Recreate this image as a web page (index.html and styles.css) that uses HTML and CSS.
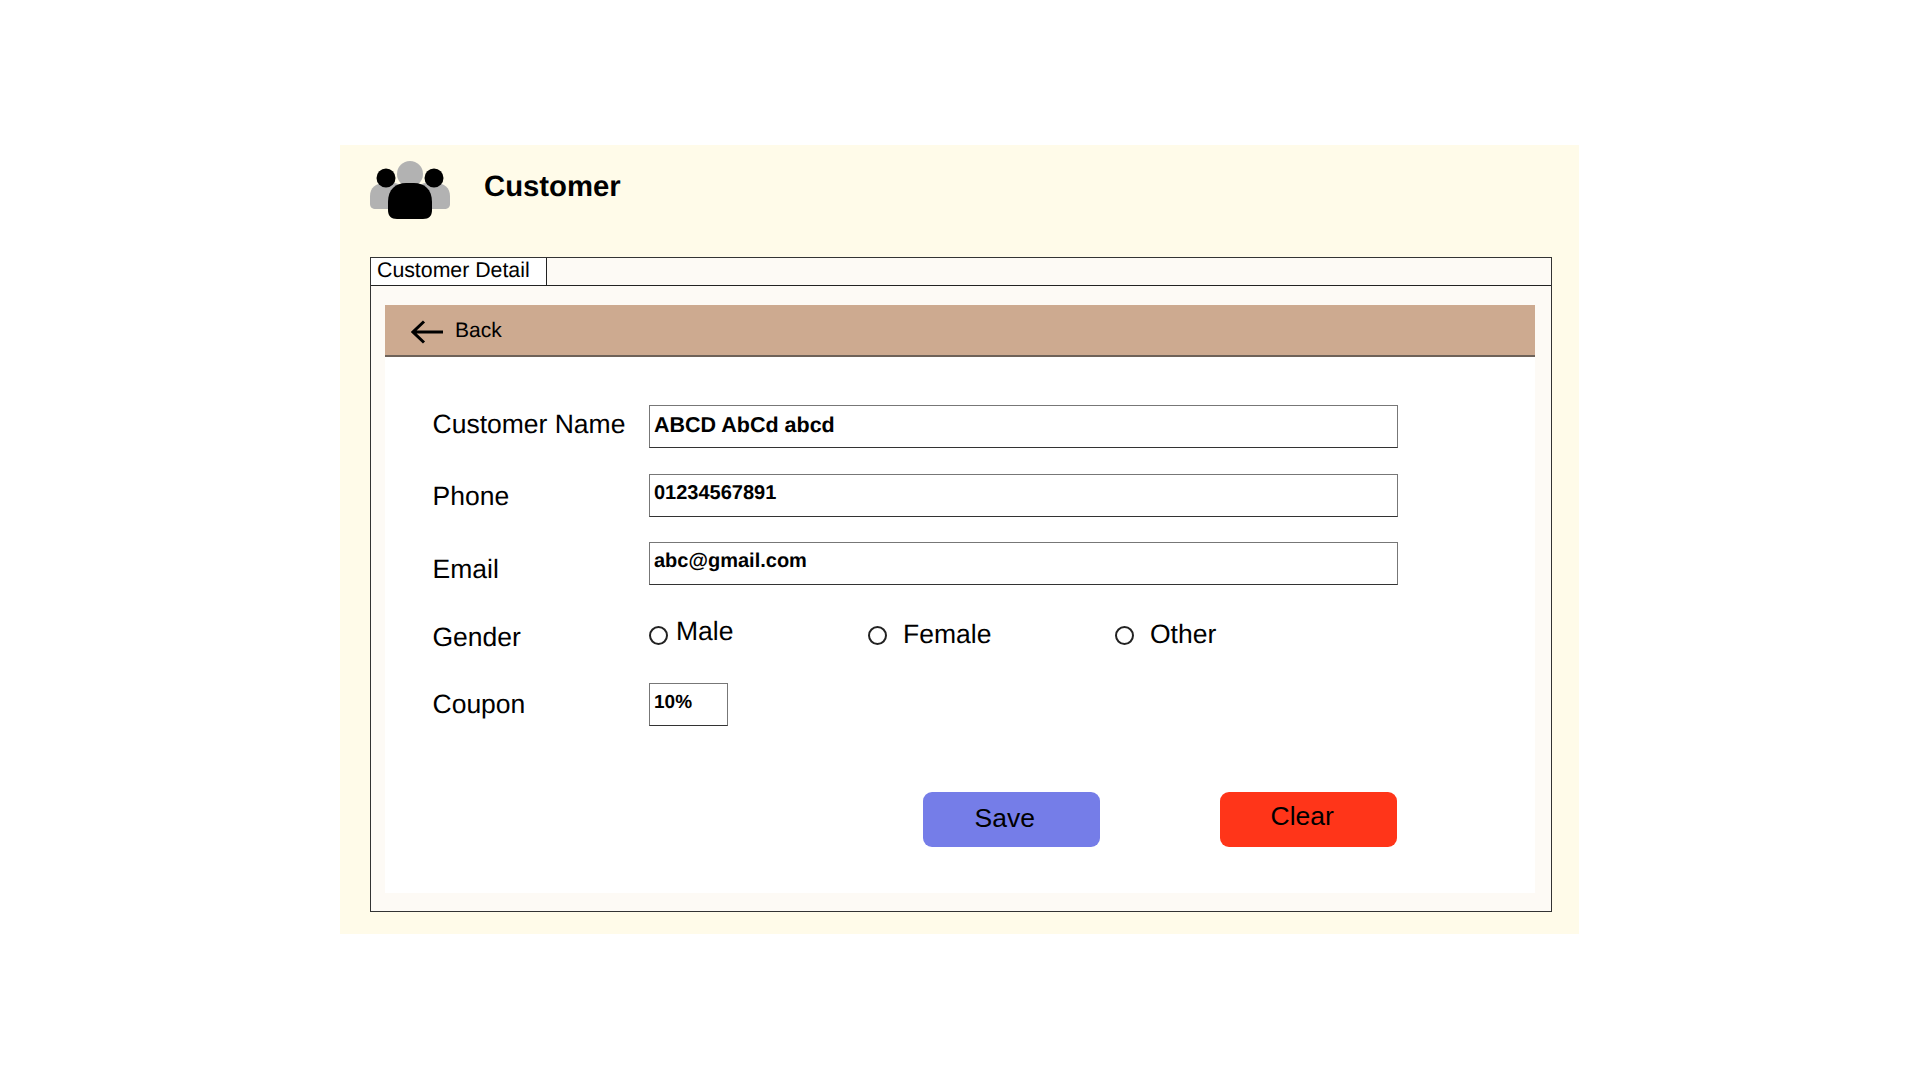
FILE: index.html
```html
<!DOCTYPE html>
<html lang="en">
<head>
<meta charset="utf-8">
<title>Customer</title>
<link rel="stylesheet" href="styles.css">
</head>
<body>
<main class="panel">
  <header class="head">
    <svg class="logo" width="82" height="60" viewBox="0 0 82 60" aria-hidden="true">
      <path class="grey" d="M0 36C0 28 6 23 14 23h10c6 0 10 6 10 13v8c0 3-2 5-5 5H6c-4 0-6-2-6-5z"/>
      <path class="grey" d="M80 36c0-8-6-13-14-13H56c-6 0-10 6-10 13v8c0 3 2 5 5 5h23c4 0 6-2 6-5z"/>
      <circle class="black" cx="16" cy="18" r="9.500"/>
      <circle class="black" cx="64" cy="18" r="9.500"/>
      <circle class="grey" cx="40" cy="14" r="13"/>
      <path class="black" d="M18 42C18 29 26 23 36 23H44C54 23 62 29 62 42v8c0 6-3 9-9 9H27c-6 0-9-3-9-9z"/>
    </svg>
    <h1 class="title">Customer</h1>
  </header>
  <section class="frame">
    <div class="tabs"><div class="tab">Customer Detail</div></div>
    <div class="body">
      <div class="bar">
        <svg class="arrow" width="34" height="24" viewBox="0 0 34 24" aria-hidden="true">
          <path d="M32 12H2M13 1.500 2 12l11 10.500"/>
        </svg>
        <span class="back">Back</span>
      </div>
      <form class="form">
        <div class="row">
          <label class="label up">Customer Name</label>
          <div class="input wide big">ABCD AbCd abcd</div>
        </div>
        <div class="row">
          <label class="label mid">Phone</label>
          <div class="input wide">01234567891</div>
        </div>
        <div class="row">
          <label class="label down">Email</label>
          <div class="input wide">abc@gmail.com</div>
        </div>
        <div class="row gender">
          <label class="label">Gender</label>
          <div class="radios">
            <span class="opt male"><i class="radio"></i><span class="optlabel tight">Male</span></span>
            <span class="opt female"><i class="radio"></i><span class="optlabel">Female</span></span>
            <span class="opt"><i class="radio"></i><span class="optlabel">Other</span></span>
          </div>
        </div>
        <div class="row">
          <label class="label coupon">Coupon</label>
          <div class="input small">10%</div>
        </div>
        <div class="actions">
          <button type="button" class="btn save"><span>Save</span></button>
          <button type="button" class="btn clear"><span>Clear</span></button>
        </div>
      </form>
    </div>
  </section>
</main>
</body>
</html>
```

FILE: styles.css
```css
* { box-sizing: border-box; }
html, body { margin: 0; padding: 0; }
body {
  background: #fff;
  font-family: "Liberation Sans", Arial, sans-serif;
  color: #000;
  min-height: 1080px;
  padding: 145px 341px 0 340px;
  text-rendering: geometricPrecision;
}
.panel {
  background: #fffbe9;
  height: 789px;
  padding: 15px 27px 22px 30px;
}
.head {
  display: flex;
  align-items: flex-start;
  height: 97px;
}
.logo { display: block; flex: none; }
.grey { fill: #b2b2b2; }
.black { fill: #000; }
.title {
  margin: 10px 0 0 32px;
  font-size: 29.300px;
  line-height: 34px;
  font-weight: 700;
}
.frame {
  height: 655px;
  border: 1px solid #333;
  background: #fdfaf5;
  display: flex;
  flex-direction: column;
}
.tabs {
  height: 28px;
  border-bottom: 1px solid #222;
  display: flex;
  flex: none;
}
.tab {
  width: 176px;
  height: 27px;
  background: #fff;
  border-right: 1px solid #222;
  font-size: 21.300px;
  line-height: 25px;
  padding-left: 6px;
}
.body {
  margin: 19px 16px 18px 14px;
  flex: 1;
  background: #fff;
}
.bar {
  height: 52px;
  background: #cdaa90;
  border-bottom: 2px solid #6e6259;
  display: flex;
  align-items: center;
  padding: 2px 0 0 26px;
}
.arrow { flex: none; margin-top: 1px; }
.arrow path { fill: none; stroke: #000; stroke-width: 3; }
.back { font-size: 21px; margin: 0 0 0 10px; }
.form { padding: 48px 0 0 47.500px; }
.row {
  display: flex;
  align-items: center;
  min-height: 43px;
  margin-bottom: 25.500px;
}
.label {
  width: 216.500px;
  flex: none;
  font-size: 26.500px;
  line-height: 32px;
}
.up { margin-bottom: 5px; }
.mid { margin-top: 1px; }
.down { margin-top: 11px; }
.coupon { margin-bottom: 1px; }
.gender { min-height: 48px; margin-bottom: 24.500px; }
.gender .label { margin-top: 4px; }
.input {
  height: 43px;
  background: #fff;
  border: 1px solid #777;
  border-bottom-color: #333;
  font-size: 20px;
  font-weight: 700;
  line-height: 36px;
  padding-left: 4px;
}
.wide { width: 749px; }
.big { font-size: 21.500px; line-height: 38px; }
.small { width: 79px; font-size: 19px; line-height: 38px; }
.radios { display: flex; align-items: center; margin-bottom: 2px; }
.opt { display: flex; align-items: center; font-size: 26.500px; line-height: 32px; }
.male { width: 219px; }
.female { width: 247px; }
.radio {
  width: 19px;
  height: 19px;
  border: 2px solid #222;
  border-radius: 50%;
  flex: none;
  margin-top: 3px;
}
.optlabel { margin-left: 16px; }
.tight { margin-left: 8px; margin-bottom: 6px; }
.actions {
  display: flex;
  justify-content: flex-start;
  margin: 66px 0 0 490.500px;
  gap: 120px;
}
.btn {
  width: 177px;
  height: 55px;
  border: 0;
  border-radius: 9px;
  font-family: inherit;
  font-size: 26.500px;
  color: #000;
  padding: 0;
  display: flex;
  justify-content: flex-start;
}
.save { background: #757de8; padding: 11px 0 0 51.500px; }
.clear { background: #ff3519; padding: 9px 0 0 50.500px; }
```
